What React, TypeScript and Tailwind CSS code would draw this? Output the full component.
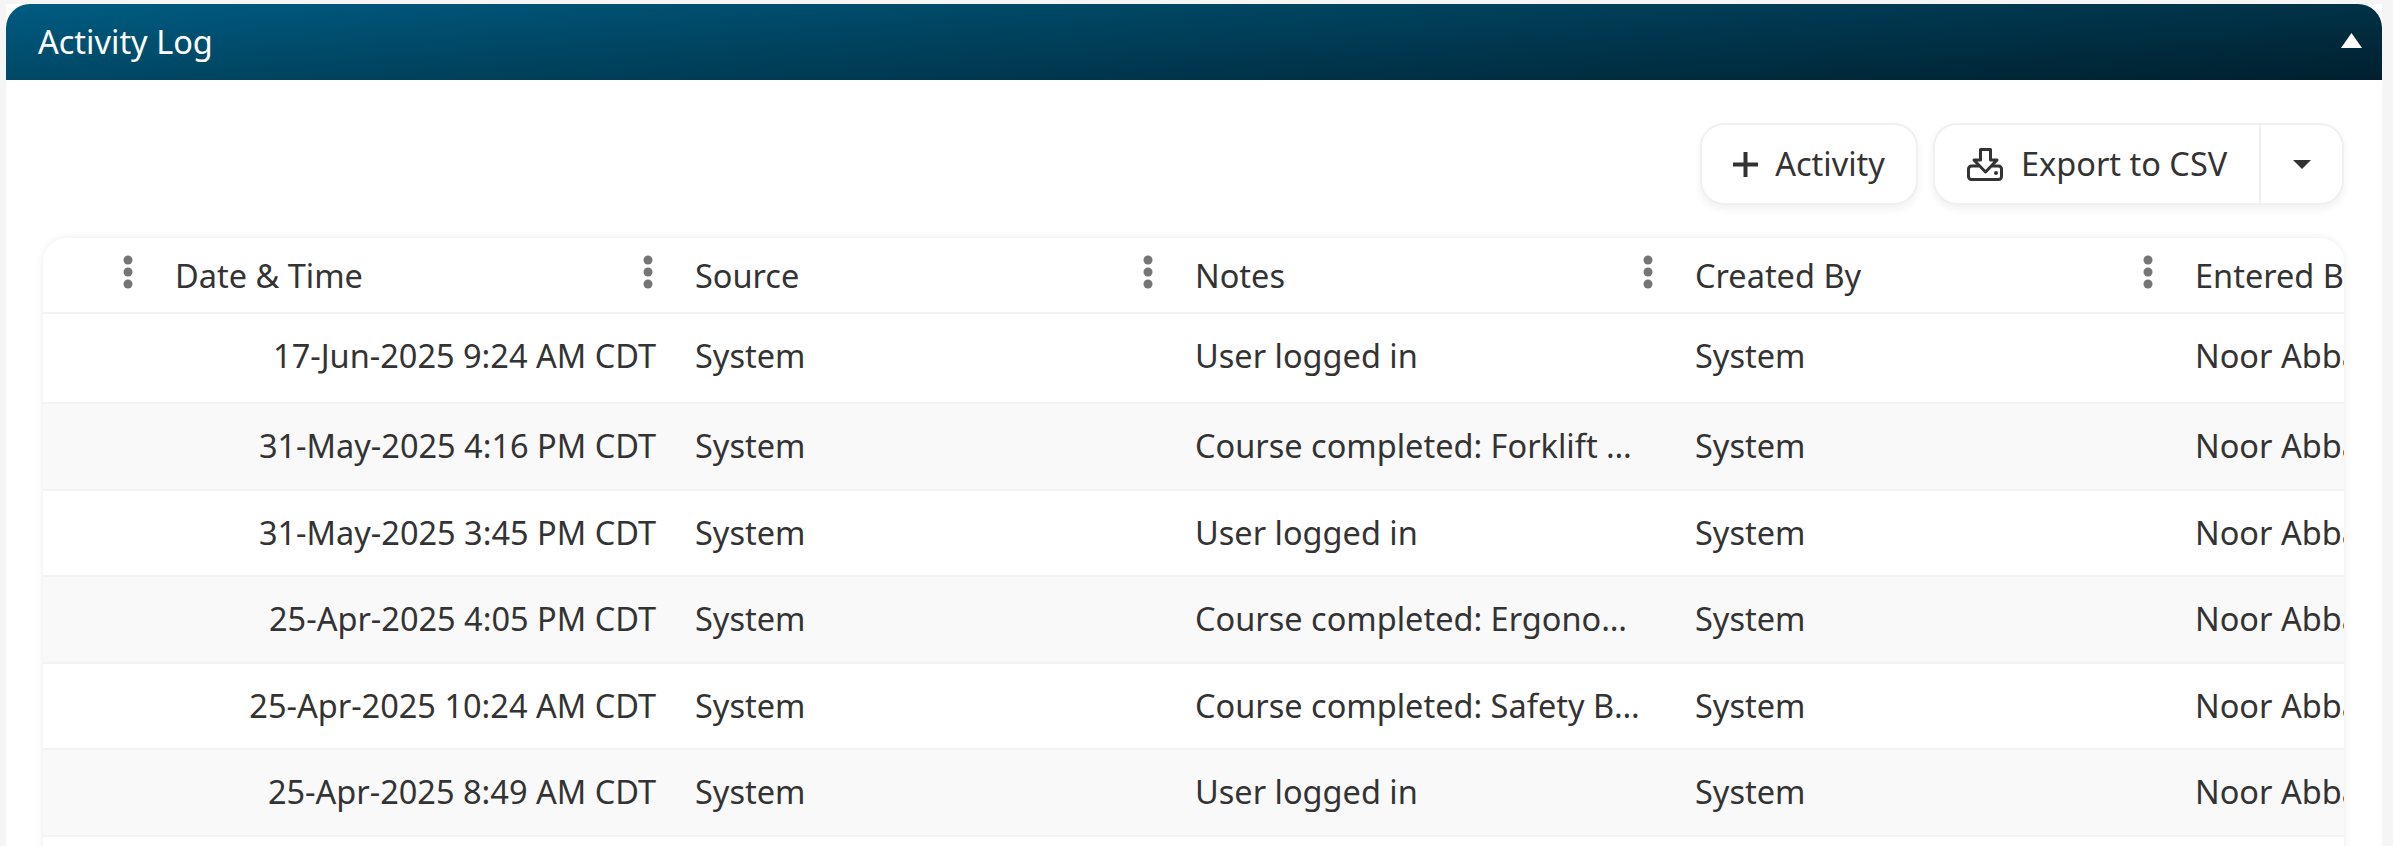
import React from "react";

const columns = ["Date & Time", "Source", "Notes", "Created By", "Entered By"];

const rows = [
  { date: "17-Jun-2025 9:24 AM CDT", notes: "User logged in" },
  { date: "31-May-2025 4:16 PM CDT", notes: "Course completed: Forklift Operator Safety" },
  { date: "31-May-2025 3:45 PM CDT", notes: "User logged in" },
  { date: "25-Apr-2025 4:05 PM CDT", notes: "Course completed: Ergonomics in the Workplace" },
  { date: "25-Apr-2025 10:24 AM CDT", notes: "Course completed: Safety Basics for New Hires" },
  { date: "25-Apr-2025 8:49 AM CDT", notes: "User logged in" },
  { date: "24-Apr-2025 2:11 PM CDT", notes: "User logged in" },
];

const gridCols = "grid grid-cols-[107px_520px_500px_500px_500px_500px]";

const Kebab = () => (
  <svg width="10" height="34" viewBox="0 0 10 34" className="absolute right-[17px] top-[17px] text-[#757575]">
    <circle cx="5" cy="5" r="4.5" fill="currentColor" />
    <circle cx="5" cy="17" r="4.5" fill="currentColor" />
    <circle cx="5" cy="29" r="4.5" fill="currentColor" />
  </svg>
);

const ExportIcon = () => (
  <svg width="36" height="33" viewBox="0 0 36 33" fill="none" stroke="#333333" strokeWidth="3" strokeLinejoin="round">
    <path d="M13.500 1.500h10v10.500h6.500L18.500 24L7 12h6.500z" />
    <path d="M12 18H4.500a3 3 0 0 0-3 3v7.500a3 3 0 0 0 3 3h27a3 3 0 0 0 3-3V21a3 3 0 0 0-3-3H25" />
    <circle cx="29" cy="25" r="2" fill="#333333" stroke="none" />
  </svg>
);

export default function App() {
  return (
    <div className="h-[846px] overflow-hidden bg-[#f5f5f5] pt-1 pl-1.5 pr-[11px] font-['Noto_Sans',sans-serif] text-[32.5px] text-[#333333]">
      <div className="h-full bg-white">
        <div className="flex h-[76px] items-center justify-between rounded-t-[24px] bg-linear-176 from-[#005c82] to-[#00202e] pl-8 pr-5 text-white">
          <span>Activity Log</span>
          <svg width="21" height="15" viewBox="0 0 21 15" className="-mt-1">
            <path d="M10.500 0L21 15H0z" fill="#ffffff" />
          </svg>
        </div>

        <div className="flex justify-end gap-[15px] pt-[43px] pr-[38px]">
          <button className="flex h-[82px] w-[218px] items-center justify-center gap-[17px] rounded-[24px] border-2 border-[#f0f0f0] bg-white shadow-[0_4px_8px_rgba(0,0,0,0.06)]">
            <svg width="25" height="25" viewBox="0 0 25 25">
              <path d="M12.500 0v25M0 12.500h25" stroke="#333333" strokeWidth="4" />
            </svg>
            <span>Activity</span>
          </button>
          <div className="flex h-[82px] w-[411px] items-stretch rounded-[24px] border-2 border-[#f0f0f0] bg-white shadow-[0_4px_8px_rgba(0,0,0,0.06)]">
            <button className="flex w-[326px] items-center gap-[18px] border-r-2 border-[#f0f0f0] pl-8">
              <ExportIcon />
              <span>Export to CSV</span>
            </button>
            <button className="flex flex-1 items-center justify-center">
              <svg width="18" height="9" viewBox="0 0 18 9">
                <path d="M0 0h18L9 9z" fill="#333333" />
              </svg>
            </button>
          </div>
        </div>

        <div className="mt-[33px] ml-[37px] w-[2301px] overflow-hidden rounded-t-[24px] bg-white shadow-[0_0_8px_rgba(0,0,0,0.08)]">
          <div className={`${gridCols} h-[76px] border-b-2 border-[#f3f3f3]`}>
            <div className="relative">
              <Kebab />
            </div>
            {columns.map((c, i) => (
              <div key={c} className="relative flex items-center whitespace-nowrap pl-[25px] pt-[3px]">
                <span>{c}</span>
                {i < columns.length - 1 && <Kebab />}
              </div>
            ))}
          </div>
          {rows.map((r, i) => (
            <div
              key={r.date}
              className={`${gridCols} items-center border-b-2 border-[#f3f3f3] ${i === 0 ? "h-[90px] pb-1" : "h-[86.6px]"} ${i % 2 === 1 ? "bg-[#f9f9f9]" : "bg-white"}`}
            >
              <div />
              <div className="pr-[14px] text-right">{r.date}</div>
              <div className="pl-[25px]">System</div>
              <div className="truncate pl-[25px] pr-[20px]">{r.notes}</div>
              <div className="pl-[25px]">System</div>
              <div className="whitespace-nowrap pl-[25px]">Noor Abbas</div>
            </div>
          ))}
        </div>
      </div>
    </div>
  );
}
